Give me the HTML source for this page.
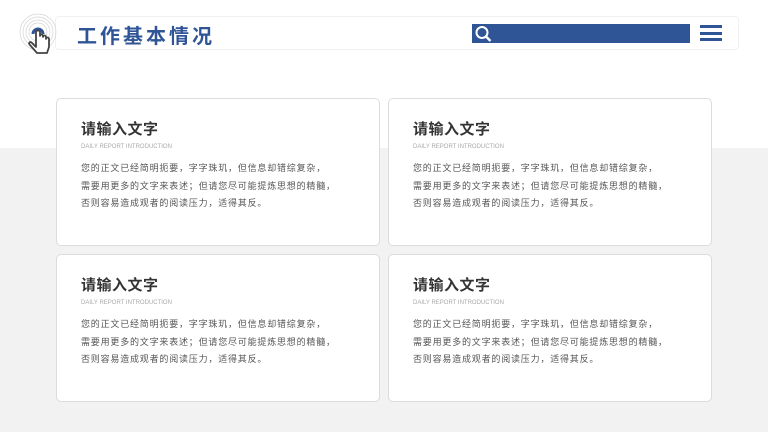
<!DOCTYPE html>
<html><head><meta charset="utf-8"><style>
*{margin:0;padding:0;box-sizing:border-box}
body{width:768px;height:432px;position:relative;overflow:hidden;background:#fff;font-family:"Liberation Sans","Noto Sans CJK SC",sans-serif}
.gray{position:absolute;left:0;top:148px;width:768px;height:284px;background:#f2f2f2}
.hdr{position:absolute;left:55px;top:16px;width:684px;height:34px;background:#fff;border:1px solid #eef0f3;border-radius:4px}
.title{position:absolute;left:77px;top:20px;font-size:20px;font-weight:bold;color:#2f5597;letter-spacing:3px}
.search{position:absolute;left:472px;top:24px;width:218px;height:19px;background:#2f5597}
.menu{position:absolute;left:700px;top:25px;width:22px}
.menu i{display:block;height:3px;background:#2f5597;margin-bottom:3.5px}
.card{position:absolute;width:324px;height:148px;background:#fff;border:1px solid #dcdcdc;border-radius:5px}
.card h3{position:absolute;left:24px;top:19px;font-size:15px;font-weight:bold;color:#333;letter-spacing:0.5px}
.card .en{position:absolute;left:24px;top:45px;font-size:6px;color:#aaa}
.card p{position:absolute;left:24px;top:61px;font-size:9px;letter-spacing:0.8px;line-height:17.5px;color:#555;white-space:nowrap}
</style></head><body>
<div class="gray"></div>
<div class="hdr"></div>
<svg style="position:absolute;left:16px;top:12px" width="46" height="52" viewBox="0 0 46 52">
<g fill="none" stroke="#d4d4d4" stroke-width="0.7">
<circle cx="22" cy="20" r="18"/><circle cx="22" cy="20" r="15"/><circle cx="22" cy="20" r="12"/><circle cx="22" cy="20" r="9"/></g>
<path d="M17 22a5 5 0 1 1 10 0" fill="none" stroke="#2f5597" stroke-width="3"/>
<path d="M20 20v15l-4-4c-2-2-4 0-2 2l7 8h10l2-6v-8c0-2-3-2-3 0v-2c0-2-3-2-3 0v-1c0-2-3-2-3 0v-4c0-2-4-2-4 0z" fill="#fff" stroke="#444" stroke-width="1.8" stroke-linejoin="round"/>
</svg>
<div class="title">工作基本情况</div>
<div class="search"><svg width="22" height="19" viewBox="0 0 22 19"><circle cx="10" cy="8.5" r="5.5" fill="none" stroke="#fff" stroke-width="2"/><path d="M14 12.5l4.5 4.5" stroke="#fff" stroke-width="2.4"/></svg></div>
<div class="menu"><i></i><i></i><i></i></div>
<div class="card" style="left:56px;top:98px"><h3>请输入文字</h3><div class="en">DAILY REPORT INTRODUCTION</div><p>您的正文已经简明扼要，字字珠玑，但信息却错综复杂，<br>需要用更多的文字来表述；但请您尽可能提炼思想的精髓，<br>否则容易造成观者的阅读压力，适得其反。</p></div>
<div class="card" style="left:388px;top:98px"><h3>请输入文字</h3><div class="en">DAILY REPORT INTRODUCTION</div><p>您的正文已经简明扼要，字字珠玑，但信息却错综复杂，<br>需要用更多的文字来表述；但请您尽可能提炼思想的精髓，<br>否则容易造成观者的阅读压力，适得其反。</p></div>
<div class="card" style="left:56px;top:254px"><h3>请输入文字</h3><div class="en">DAILY REPORT INTRODUCTION</div><p>您的正文已经简明扼要，字字珠玑，但信息却错综复杂，<br>需要用更多的文字来表述；但请您尽可能提炼思想的精髓，<br>否则容易造成观者的阅读压力，适得其反。</p></div>
<div class="card" style="left:388px;top:254px"><h3>请输入文字</h3><div class="en">DAILY REPORT INTRODUCTION</div><p>您的正文已经简明扼要，字字珠玑，但信息却错综复杂，<br>需要用更多的文字来表述；但请您尽可能提炼思想的精髓，<br>否则容易造成观者的阅读压力，适得其反。</p></div>
</body></html>
